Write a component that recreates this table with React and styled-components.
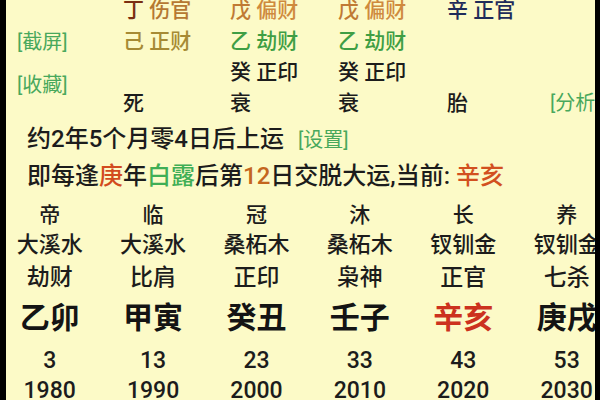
import styled, { createGlobalStyle } from "styled-components"

const GlobalStyle = createGlobalStyle`
  html, body {
    margin: 0;
    padding: 0;
    background: #000;
    font-family: Roboto, "Noto Sans CJK SC", sans-serif;
  }
`

const Screen = styled.div`
  display: flex;
  width: 600px;
  height: 400px;
  box-sizing: border-box;
  padding: 0 5px 0 6px;
  background: #000;
  overflow: hidden;
`

const Panel = styled.div`
  flex: 1;
  min-width: 0;
  background: #fcfac7;
  overflow: hidden;
  color: #1c1c1c;
  font-weight: 500;
`

const PillarGrid = styled.div`
  display: grid;
  grid-template-columns: 106px 107px 108px 109px 103px max-content;
  margin-top: -5px;
  padding-left: 11px;
  font-size: 21px;
  white-space: nowrap;
`

const LabelCol = styled.div`
  display: flex;
  flex-direction: column;
  gap: 12px;
  padding-top: 32px;
`

const Link = styled.span`
  color: #48a85c;
  font-size: 20px;
  font-weight: 400;
  line-height: 31px;
  margin-left: ${(p) => p.$gap || 0}px;
`

const PillarCol = styled.div`
  display: flex;
  flex-direction: column;
`

const ActionCol = styled.div`
  display: flex;
  flex-direction: column;
  justify-content: flex-end;
  height: 124px;
`

const Line = styled.div`
  height: 31px;
  line-height: 31px;
`

const Tone = styled.span`
  color: ${(p) => p.$c || "#1c1c1c"};
`

const Info = styled.div`
  padding: 2px 0 0 21px;
  font-size: 24px;
  line-height: 37px;
  white-space: nowrap;
`

const LuckGrid = styled.div`
  display: grid;
  grid-template-columns: repeat(6, 103.4px);
  margin: 5px 0 0 -8px;
  white-space: nowrap;
`

const LuckCol = styled.div`
  display: flex;
  flex-direction: column;
  align-items: center;
`

const Stage = styled.div`
  font-size: 21px;
  line-height: 30px;
`

const NaYin = styled.div`
  font-size: 22px;
  line-height: 30px;
`

const God = styled.div`
  font-size: 23px;
  line-height: 36px;
`

const Pillar = styled.div`
  font-size: 30px;
  font-weight: 700;
  line-height: 44px;
  color: ${(p) => p.$c || "#141414"};
`

const Num = styled.div`
  font-size: 23px;
  line-height: 30px;
  margin-top: ${(p) => p.$top || 0}px;
`

const pillars = [
  {
    rows: [
      ["丁", "#7a2e12", "伤官", "#b57832"],
      ["己", "#a68a34", "正财", "#a68a34"],
      null,
    ],
    state: "死",
  },
  {
    rows: [
      ["戊", "#c07a34", "偏财", "#cf8a3e"],
      ["乙", "#3f9e44", "劫财", "#3f9e44"],
      ["癸", "#1c1c1c", "正印", "#1c1c1c"],
    ],
    state: "衰",
  },
  {
    rows: [
      ["戊", "#c07a34", "偏财", "#cf8a3e"],
      ["乙", "#3f9e44", "劫财", "#3f9e44"],
      ["癸", "#1c1c1c", "正印", "#1c1c1c"],
    ],
    state: "衰",
  },
  {
    rows: [["辛", "#1f2c5a", "正官", "#1f2c5a"], null, null],
    state: "胎",
  },
]

const luck = [
  { stage: "帝", nayin: "大溪水", god: "劫财", gz: "乙卯", age: 3, year: 1980 },
  { stage: "临", nayin: "大溪水", god: "比肩", gz: "甲寅", age: 13, year: 1990 },
  { stage: "冠", nayin: "桑柘木", god: "正印", gz: "癸丑", age: 23, year: 2000 },
  { stage: "沐", nayin: "桑柘木", god: "枭神", gz: "壬子", age: 33, year: 2010 },
  { stage: "长", nayin: "钗钏金", god: "正官", gz: "辛亥", age: 43, year: 2020, now: true },
  { stage: "养", nayin: "钗钏金", god: "七杀", gz: "庚戌", age: 53, year: 2030 },
]

export default function App() {
  return (
    <>
      <GlobalStyle />
      <Screen>
        <Panel>
          <PillarGrid>
            <LabelCol>
              <Link>[截屏]</Link>
              <Link>[收藏]</Link>
            </LabelCol>
            {pillars.map((p, i) => (
              <PillarCol key={i}>
                {p.rows.map((r, j) => (
                  <Line key={j}>
                    {r && (
                      <>
                        <Tone $c={r[1]}>{r[0]}</Tone> <Tone $c={r[3]}>{r[2]}</Tone>
                      </>
                    )}
                  </Line>
                ))}
                <Line>{p.state}</Line>
              </PillarCol>
            ))}
            <ActionCol>
              <Link>[分析]</Link>
            </ActionCol>
          </PillarGrid>

          <Info>
            <div>
              约2年5个月零4日后上运<Link $gap={14}>[设置]</Link>
            </div>
            <div>
              即每逢<Tone $c="#d24b1e">庚</Tone>年<Tone $c="#3fae55">白露</Tone>后第
              <Tone $c="#c4661e">12</Tone>日交脱大运,当前: <Tone $c="#d2501f">辛亥</Tone>
            </div>
          </Info>

          <LuckGrid>
            {luck.map((l) => (
              <LuckCol key={l.year}>
                <Stage>{l.stage}</Stage>
                <NaYin>{l.nayin}</NaYin>
                <God>{l.god}</God>
                <Pillar $c={l.now ? "#cc321e" : undefined}>{l.gz}</Pillar>
                <Num $top={6}>{l.age}</Num>
                <Num>{l.year}</Num>
              </LuckCol>
            ))}
          </LuckGrid>
        </Panel>
      </Screen>
    </>
  )
}
